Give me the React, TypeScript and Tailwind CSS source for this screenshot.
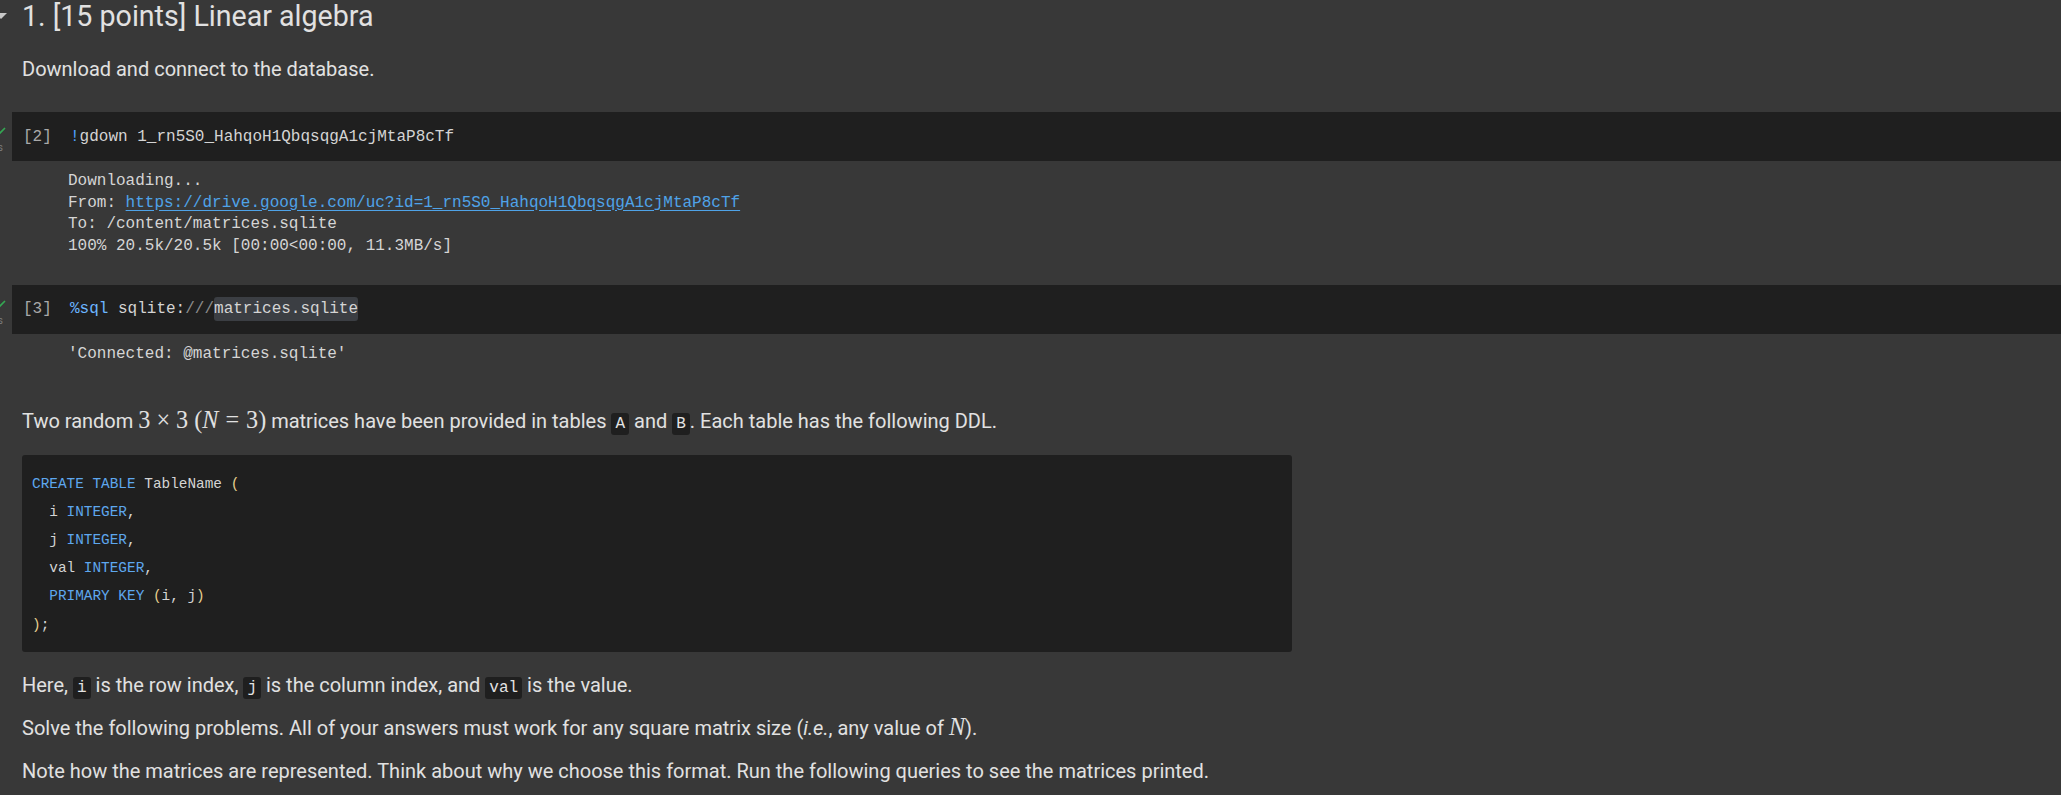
import React from 'react';

const mono = "font-['Liberation_Mono','DejaVu_Sans_Mono',monospace]";
const serif = "font-['Liberation_Serif','DejaVu_Serif',serif]";

function Gutter({ time }: { time: string }) {
  return (
    <>
      <svg className="absolute left-[-18px] top-[15px] w-[12px] h-[10px]" viewBox="0 0 12 10" fill="none">
        <path d="M1 5 L4 8 L11 1" stroke="#34a853" strokeWidth="1.6" />
      </svg>
      <span className="absolute right-[calc(100%+9px)] top-[31px] text-[10px] leading-none text-[#7d7d7d] font-['Roboto',sans-serif]">
        {time}
      </span>
    </>
  );
}

function CodeCell({ n, time, children }: { n: number; time: string; children: React.ReactNode }) {
  return (
    <div className={`relative ml-[12px] h-[49px] bg-[#1f1f1f] flex items-center text-[16px] ${mono}`}>
      <Gutter time={time} />
      <span className="w-[58px] pl-[11px] shrink-0 text-[#a9a9a9]">[{n}]</span>
      <span className="whitespace-pre text-[#d4d4d4]">{children}</span>
    </div>
  );
}

function Code({ children }: { children: React.ReactNode }) {
  return (
    <code className={`${mono} text-[16px] leading-none text-[#e3e3e3] bg-[#1f1f1f] rounded-[3px] px-[4px] py-[2px]`}>
      {children}
    </code>
  );
}

export default function App() {
  return (
    <div className="w-full min-h-screen bg-[#383838] text-[#e1e1e1] font-['Roboto',sans-serif] overflow-hidden">
      {/* Section heading */}
      <div className="relative h-[33px]">
        <svg className="absolute left-[-5px] top-[13px] w-[12px] h-[6px]" viewBox="0 0 12 6">
          <polygon points="0,0 12,0 6,6" fill="#c8c8c8" />
        </svg>
        <h1 className="pl-[22px] text-[28.6px] leading-[33px] font-normal">1. [15 points] Linear algebra</h1>
      </div>

      <p className="mt-[22px] pl-[22px] text-[20px] leading-[28px]">Download and connect to the database.</p>

      {/* Cell 2 */}
      <div className="mt-[29px]">
        <CodeCell n={2} time="3s">
          <span className="text-[#4ea1ff]">!</span>gdown 1_rn5S0_HahqoH1QbqsqgA1cjMtaP8cTf
        </CodeCell>
      </div>
      <div className={`mt-[10px] pl-[68px] text-[16px] leading-[21.7px] text-[#d5d5d5] ${mono} whitespace-pre`}>
        <div>Downloading...</div>
        <div>
          From: <span className="text-[#4fa3e8] underline underline-offset-[3px]">https://drive.google.com/uc?id=1_rn5S0_HahqoH1QbqsqgA1cjMtaP8cTf</span>
        </div>
        <div>To: /content/matrices.sqlite</div>
        <div>100% 20.5k/20.5k [00:00&lt;00:00, 11.3MB/s]</div>
      </div>

      {/* Cell 3 */}
      <div className="mt-[27px]">
        <CodeCell n={3} time="0s">
          <span className="text-[#6cb6ff]">%sql</span> sqlite:<span className="text-[#8c8c8c]">///</span>
          <span className="bg-[#3b3e43] rounded-[3px] py-[3px]">matrices.sqlite</span>
        </CodeCell>
      </div>
      <div className={`mt-[10px] pl-[68px] text-[16px] leading-[21.7px] text-[#d5d5d5] ${mono} whitespace-pre`}>
        'Connected: @matrices.sqlite'
      </div>

      {/* Description */}
      <p className="mt-[41px] pl-[22px] text-[20px] leading-[28px]">
        Two random{' '}
        <span className={`${serif} text-[24.2px] leading-none`}>
          3<span className="mx-[6px]">×</span>3 (<i>N</i>
          <span className="mx-[7px]">=</span>3)
        </span>{' '}
        matrices have been provided in tables <Code>A</Code> and <Code>B</Code>. Each table has the following DDL.
      </p>

      {/* DDL block */}
      <pre
        className={`mt-[20px] ml-[22px] w-[1270px] bg-[#1f1f1f] rounded-[3px] pt-[15px] pb-[13px] pl-[10px] text-[14.4px] leading-[28.2px] text-[#d4d4d4] ${mono}`}
      >
        <div><span className="text-[#5ea7ee]">CREATE TABLE</span> TableName <span className="text-[#e6cf8f]">(</span></div>
        <div>  i <span className="text-[#5ea7ee]">INTEGER</span>,</div>
        <div>  j <span className="text-[#5ea7ee]">INTEGER</span>,</div>
        <div>  val <span className="text-[#5ea7ee]">INTEGER</span>,</div>
        <div>  <span className="text-[#5ea7ee]">PRIMARY KEY</span> <span className="text-[#e6cf8f]">(</span>i, j<span className="text-[#e6cf8f]">)</span></div>
        <div><span className="text-[#e6cf8f]">)</span>;</div>
      </pre>

      <p className="mt-[19px] pl-[22px] text-[20px] leading-[28px]">
        Here, <Code>i</Code> is the row index, <Code>j</Code> is the column index, and <Code>val</Code> is the value.
      </p>
      <p className="mt-[15px] pl-[22px] text-[20px] leading-[28px]">
        Solve the following problems. All of your answers must work for any square matrix size (<i>i.e.</i>, any value of{' '}
        <i className={`${serif} text-[24.2px] leading-none`}>N</i>).
      </p>
      <p className="mt-[15px] pl-[22px] text-[20px] leading-[28px]">
        Note how the matrices are represented. Think about why we choose this format. Run the following queries to see the matrices printed.
      </p>
    </div>
  );
}
